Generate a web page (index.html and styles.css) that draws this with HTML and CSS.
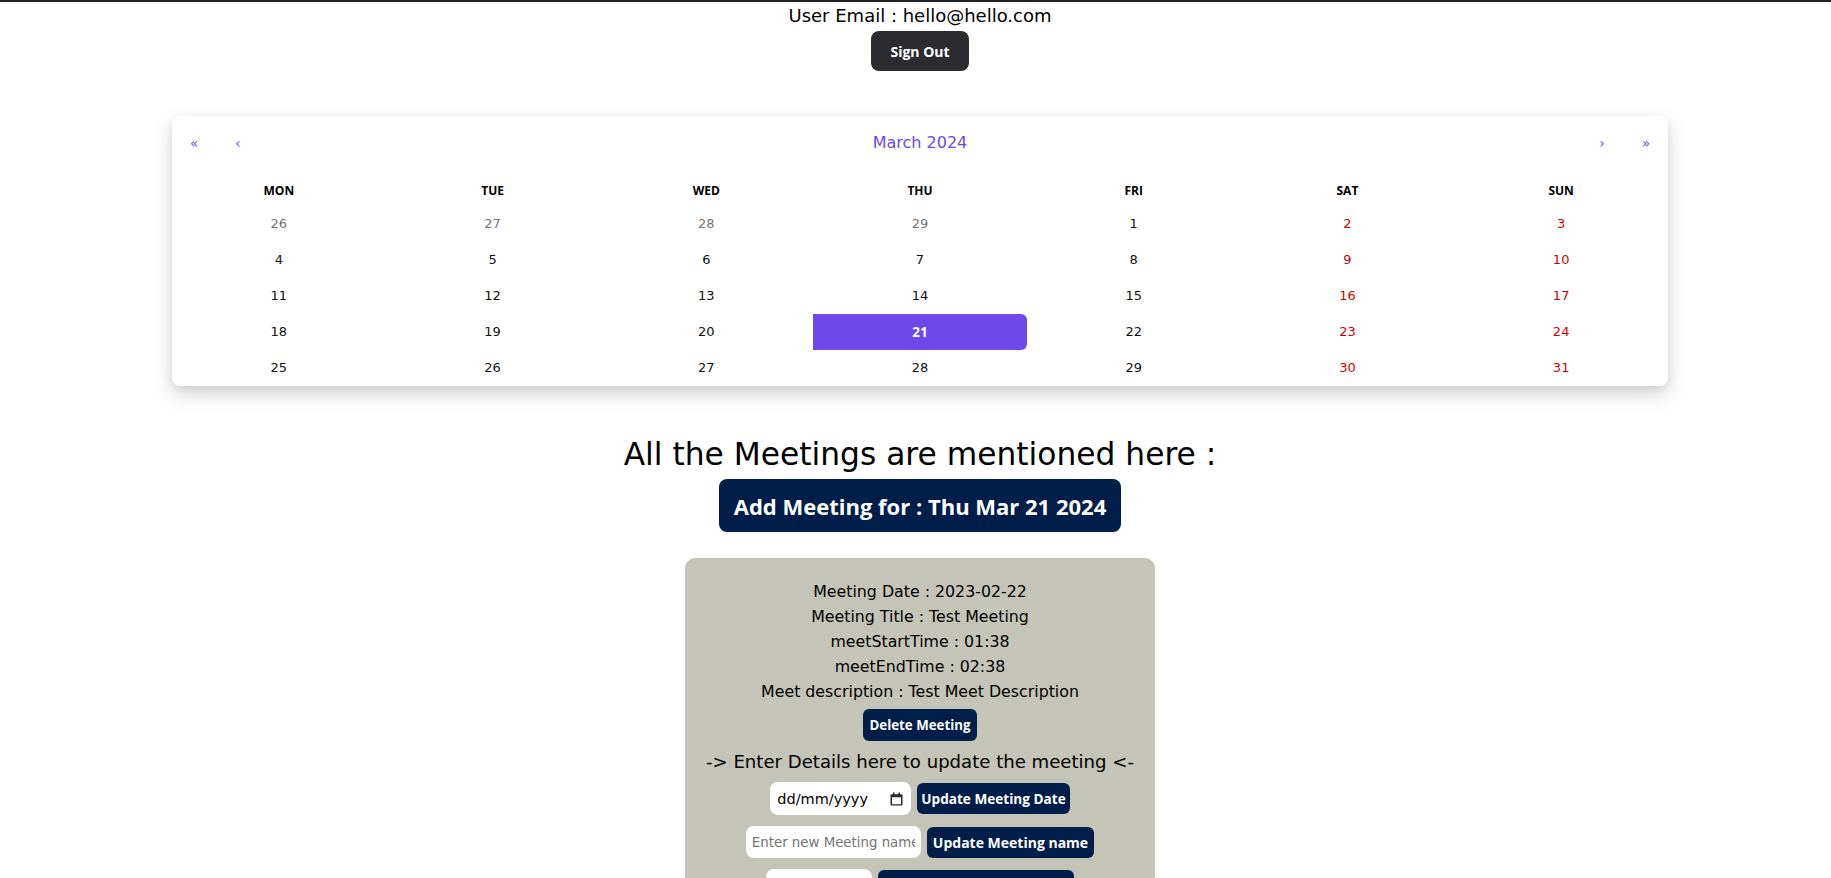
FILE: index.html
```html
<!DOCTYPE html>
<html lang="en-GB">
<head>
<meta charset="utf-8">
<title>Meetings</title>
<link rel="stylesheet" href="styles.css">
</head>
<body>
<div class="page">
  <header class="user-bar">
    <div class="user-email">User Email : hello@hello.com</div>
    <button class="btn-signout">Sign Out</button>
  </header>

  <section class="calendar">
    <div class="cal-nav">
      <button class="cal-arrow">«</button>
      <button class="cal-arrow">‹</button>
      <button class="cal-label">March 2024</button>
      <button class="cal-arrow">›</button>
      <button class="cal-arrow">»</button>
    </div>
    <div class="cal-weekdays">
      <div>MON</div><div>TUE</div><div>WED</div><div>THU</div><div>FRI</div><div>SAT</div><div>SUN</div>
    </div>
    <div class="cal-days">
      <button class="tile other">26</button>
      <button class="tile other">27</button>
      <button class="tile other">28</button>
      <button class="tile other">29</button>
      <button class="tile">1</button>
      <button class="tile weekend">2</button>
      <button class="tile weekend">3</button>

      <button class="tile">4</button>
      <button class="tile">5</button>
      <button class="tile">6</button>
      <button class="tile">7</button>
      <button class="tile">8</button>
      <button class="tile weekend">9</button>
      <button class="tile weekend">10</button>

      <button class="tile">11</button>
      <button class="tile">12</button>
      <button class="tile">13</button>
      <button class="tile">14</button>
      <button class="tile">15</button>
      <button class="tile weekend">16</button>
      <button class="tile weekend">17</button>

      <button class="tile">18</button>
      <button class="tile">19</button>
      <button class="tile">20</button>
      <button class="tile active">21</button>
      <button class="tile">22</button>
      <button class="tile weekend">23</button>
      <button class="tile weekend">24</button>

      <button class="tile">25</button>
      <button class="tile">26</button>
      <button class="tile">27</button>
      <button class="tile">28</button>
      <button class="tile">29</button>
      <button class="tile weekend">30</button>
      <button class="tile weekend">31</button>
    </div>
  </section>

  <h1 class="meetings-title">All the Meetings are mentioned here :</h1>
  <div class="add-wrap">
    <button class="btn-add">Add Meeting for : Thu Mar 21 2024</button>
  </div>

  <section class="meeting-card">
    <p class="meet-line">Meeting Date : 2023-02-22</p>
    <p class="meet-line">Meeting Title : Test Meeting</p>
    <p class="meet-line">meetStartTime : 01:38</p>
    <p class="meet-line">meetEndTime : 02:38</p>
    <p class="meet-line">Meet description : Test Meet Description</p>
    <button class="btn-navy btn-delete">Delete Meeting</button>
    <h3 class="update-title">-&gt; Enter Details here to update the meeting &lt;-</h3>
    <div class="update-row">
      <label class="date-field">
        <input class="date-input" type="text" placeholder="dd/mm/yyyy">
        <svg class="cal-icon" width="13" height="14" viewBox="0 0 13 14" aria-hidden="true">
          <rect x="3" y="0.5" width="1.6" height="2.5" fill="#2b2b2b"/>
          <rect x="8.4" y="0.5" width="1.6" height="2.5" fill="#2b2b2b"/>
          <path d="M1.5 2.2h10a1 1 0 0 1 1 1v9.3a1 1 0 0 1-1 1h-10a1 1 0 0 1-1-1V3.2a1 1 0 0 1 1-1z M2 5.2v7h9v-7z" fill="#2b2b2b" fill-rule="evenodd"/>
        </svg>
      </label>
      <button class="btn-navy btn-date">Update Meeting Date</button>
    </div>
    <div class="update-row">
      <input class="field field-text" type="text" placeholder="Enter new Meeting name">
      <button class="btn-navy">Update Meeting name</button>
    </div>
    <div class="update-row">
      <input class="field field-time" type="time">
      <button class="btn-navy">Update Meeting StartTime</button>
    </div>
  </section>
</div>
</body>
</html>
```

FILE: styles.css
```css
html, body {
  margin: 0;
  padding: 0;
  background: #ffffff;
}

body {
  border-top: 2px solid #222326;
  font-family: "DejaVu Sans", sans-serif;
  color: #000;
}

.page {
  padding-left: 9px;
  padding-bottom: 40px;
}

/* header */
.user-bar {
  display: flex;
  flex-direction: column;
  align-items: center;
}

.user-email {
  font-size: 18px;
  line-height: 28px;
}

.btn-signout {
  margin-top: 1px;
  height: 40px;
  padding: 0 19px;
  border: none;
  border-radius: 8px;
  background: #2c2b2f;
  color: #fff;
  font-family: "Open Sans", sans-serif;
  font-weight: 700;
  font-size: 14px;
  cursor: pointer;
}

/* calendar */
.calendar {
  width: 1496px;
  margin: 45px auto 0;
  background: #fff;
  border-radius: 8px;
  box-shadow: 0 8px 20px rgba(0, 0, 0, 0.18), 0 2px 6px rgba(0, 0, 0, 0.05);
  overflow: hidden;
}

.cal-nav {
  display: flex;
  height: 44px;
  margin-bottom: 16px;
}

.cal-nav button {
  border: none;
  background: none;
  margin: 0;
  padding: 0;
  color: #6f48eb;
  font-family: "DejaVu Sans", sans-serif;
  cursor: pointer;
}

.cal-arrow {
  min-width: 44px;
  font-size: 13.33px;
  padding-top: 10px !important;
}

.cal-label {
  flex: 1;
  font-size: 16px;
  padding-top: 9px !important;
}

.cal-weekdays {
  display: grid;
  grid-template-columns: repeat(7, 1fr);
  text-align: center;
  font-family: "Open Sans", sans-serif;
  font-weight: 700;
  font-size: 12px;
}

.cal-weekdays div {
  padding: 6px;
  line-height: 18px;
}

.cal-days {
  display: grid;
  grid-template-columns: repeat(7, 1fr);
}

.tile {
  height: 36px;
  margin: 0;
  border: none;
  background: none;
  padding: 10px 6.67px;
  line-height: 16px;
  font-family: "DejaVu Sans", sans-serif;
  font-size: 13px;
  color: #111;
  text-align: center;
  cursor: pointer;
}

.tile.other {
  color: #757575;
}

.tile.weekend {
  color: #d10000;
}

.tile.active {
  background: #6f48eb;
  color: #fff;
  font-family: "Open Sans", sans-serif;
  font-weight: 700;
  font-size: 13.5px;
  border-radius: 0 6px 6px 0;
}

/* meetings */
.meetings-title {
  margin: 44px 0 0;
  text-align: center;
  font-size: 31.3px;
  font-weight: 400;
  line-height: 48px;
}

.add-wrap {
  display: flex;
  justify-content: center;
  margin-top: 1px;
}

.btn-add {
  height: 53px;
  padding: 0 15px;
  border: none;
  border-radius: 8px;
  background: #011e4b;
  color: #fff;
  font-family: "Open Sans", sans-serif;
  font-weight: 700;
  font-size: 22px;
  cursor: pointer;
}

.meeting-card {
  width: 470px;
  margin: 26px auto 0;
  padding: 21px 0 20px;
  background: #c4c4b8;
  border-radius: 10px;
  display: flex;
  flex-direction: column;
  align-items: center;
}

.meet-line {
  margin: 0;
  font-size: 15.8px;
  line-height: 25px;
}

.btn-navy {
  height: 31px;
  padding: 0 6px;
  border: none;
  border-radius: 6px;
  background: #011e4b;
  color: #fff;
  font-family: "Open Sans", sans-serif;
  font-weight: 700;
  font-size: 14px;
  cursor: pointer;
}

.btn-date {
  padding: 0 4px;
  font-size: 13.6px;
}

.btn-delete {
  margin-top: 5px;
  height: 32px;
  padding: 0 6px;
  font-size: 13.3px;
}

.update-title {
  margin: 7px 0 0;
  font-size: 18.1px;
  font-weight: 400;
  line-height: 28px;
}

.update-row {
  display: flex;
  align-items: center;
  gap: 6px;
  margin-top: 6px;
}

.update-row + .update-row {
  margin-top: 11px;
}

.field {
  box-sizing: border-box;
  border: none;
  border-radius: 8px;
  background: #fff;
  font-family: "DejaVu Sans", sans-serif;
  color: #000;
  outline: none;
}

.date-field {
  box-sizing: border-box;
  display: flex;
  align-items: center;
  width: 141px;
  height: 33px;
  padding: 0 8px 0 7px;
  background: #fff;
  border-radius: 8px;
}

.date-input {
  flex: 1;
  min-width: 0;
  border: none;
  outline: none;
  background: transparent;
  padding: 0;
  font-family: "DejaVu Sans", sans-serif;
  font-size: 14.5px;
  color: #000;
}

.date-input::placeholder {
  color: #000;
}

.cal-icon {
  flex: none;
}

.field-text {
  width: 175px;
  height: 32px;
  padding: 0 6px;
  font-size: 13.33px;
}

.field-text::placeholder {
  color: #757575;
}

.field-time {
  width: 106px;
  height: 33px;
  padding: 0 7px;
  font-size: 14.5px;
}
```
